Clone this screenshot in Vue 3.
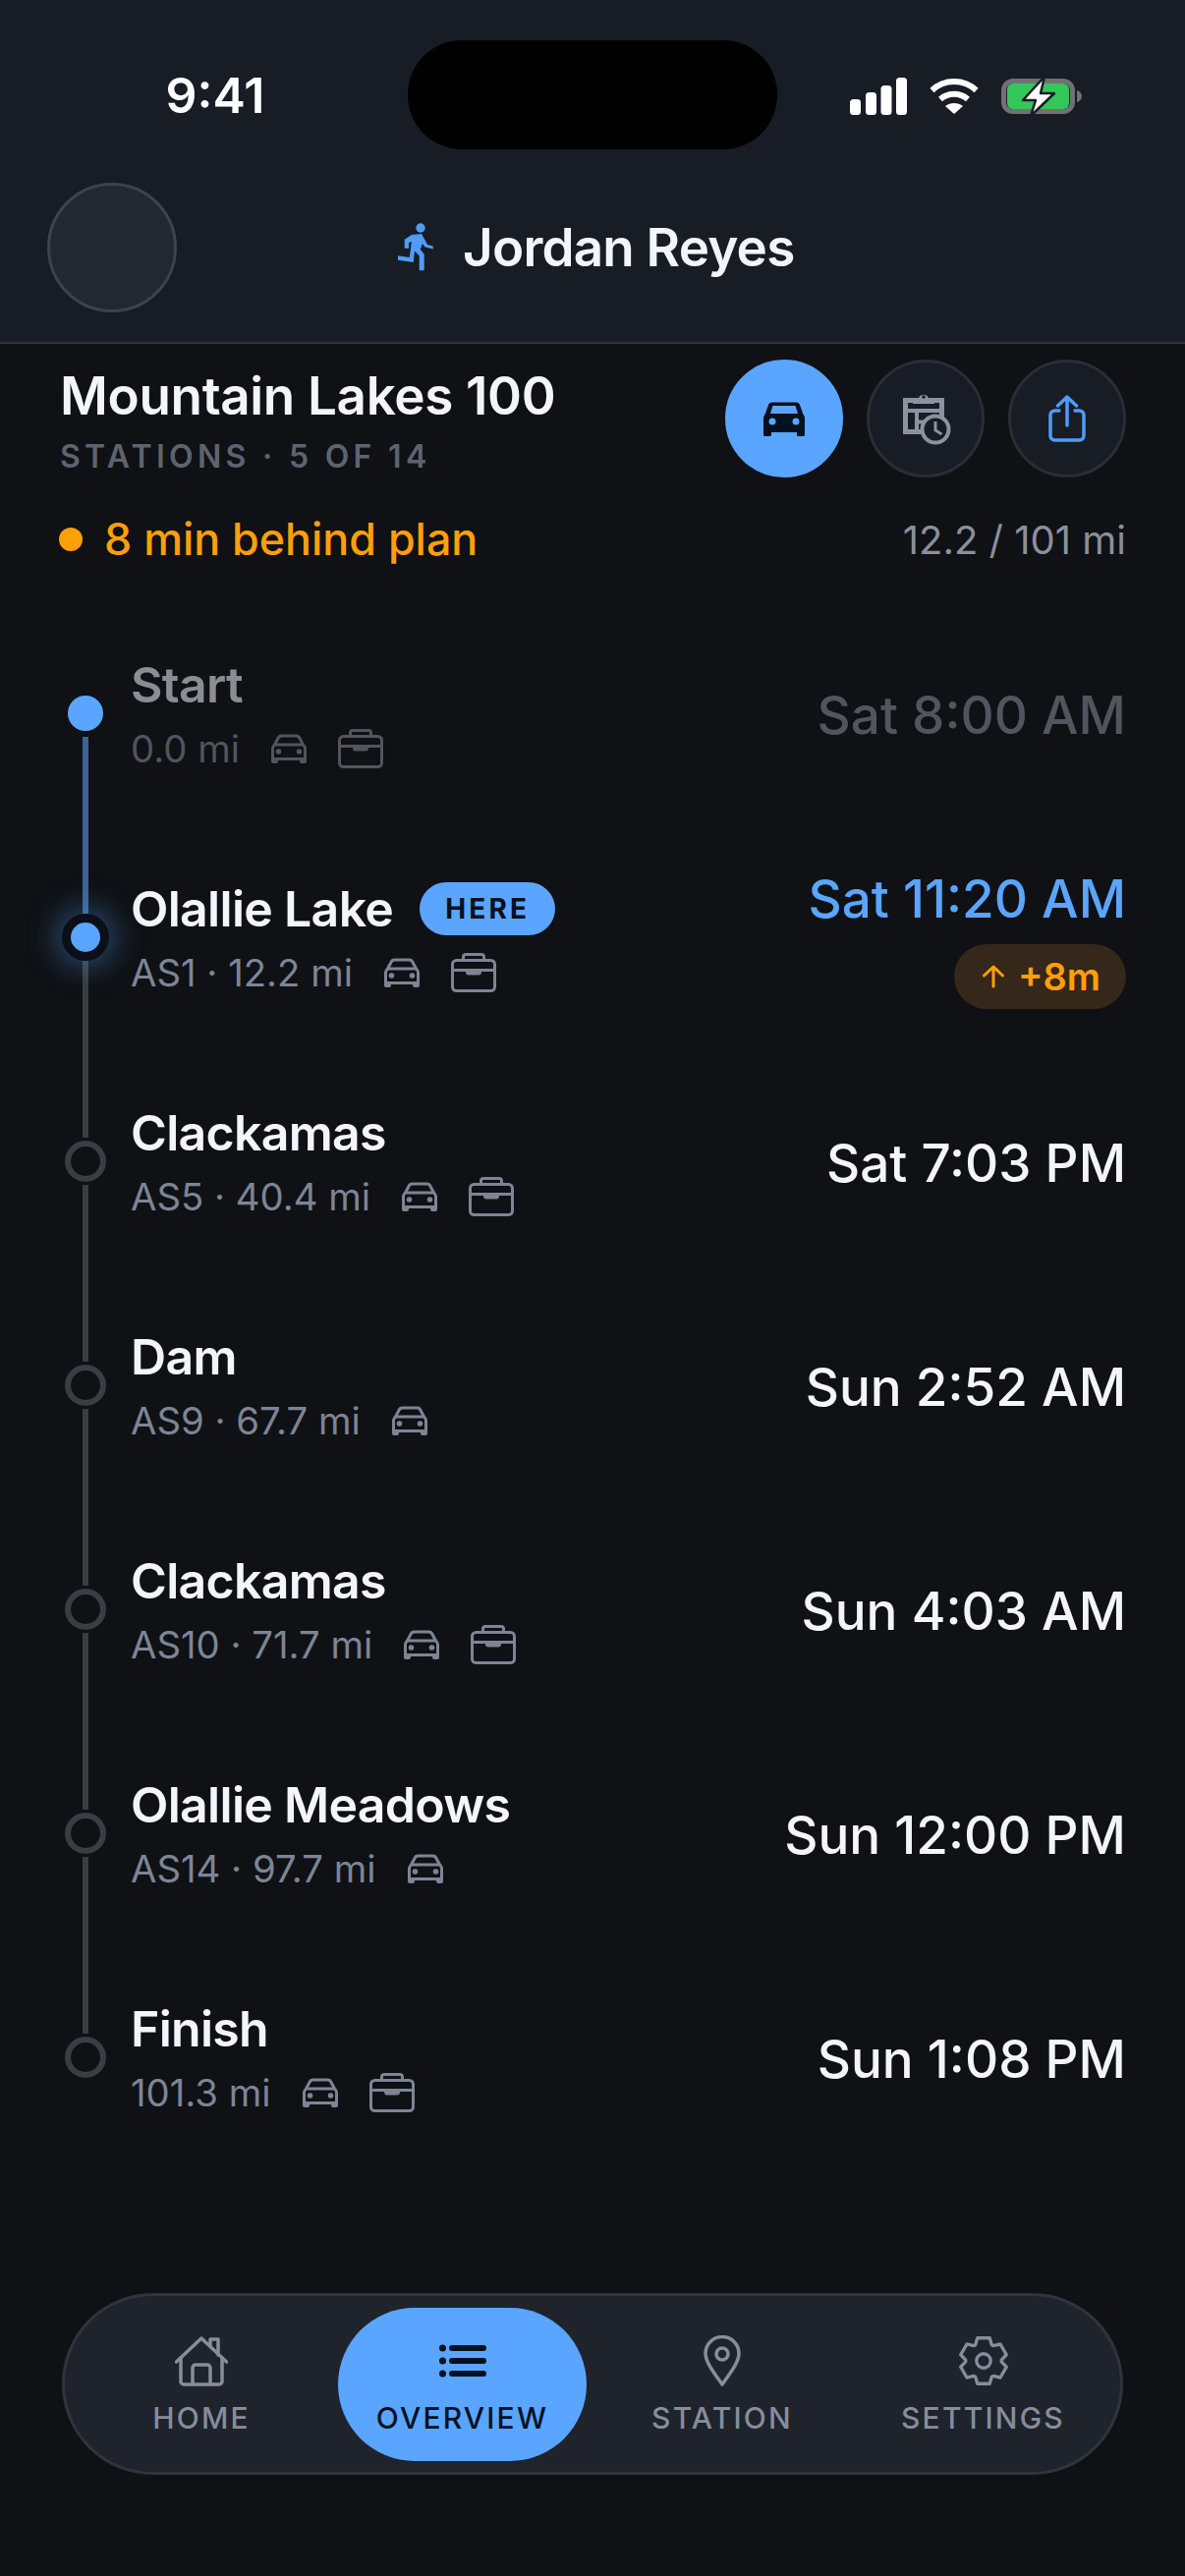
<script setup>
const tabs = [
  { label: 'HOME', icon: 'home' },
  { label: 'OVERVIEW', icon: 'list', active: true },
  { label: 'STATION', icon: 'pin' },
  { label: 'SETTINGS', icon: 'gear' }
]
const stations = [
  { name: 'Start', sub: '0.0 mi', time: 'Sat 8:00 AM', bag: true, state: 'is-done' },
  { name: 'Olallie Lake', sub: 'AS1 · 12.2 mi', time: 'Sat 11:20 AM', bag: true, state: 'is-here' },
  { name: 'Clackamas', sub: 'AS5 · 40.4 mi', time: 'Sat 7:03 PM', bag: true },
  { name: 'Dam', sub: 'AS9 · 67.7 mi', time: 'Sun 2:52 AM', bag: false },
  { name: 'Clackamas', sub: 'AS10 · 71.7 mi', time: 'Sun 4:03 AM', bag: true },
  { name: 'Olallie Meadows', sub: 'AS14 · 97.7 mi', time: 'Sun 12:00 PM', bag: false },
  { name: 'Finish', sub: '101.3 mi', time: 'Sun 1:08 PM', bag: true, last: true }
]
const gear = (() => {
  const pt = (r, deg) => {
    const a = (deg * Math.PI) / 180
    return `${(26 + r * Math.cos(a)).toFixed(2)} ${(27 + r * Math.sin(a)).toFixed(2)}`
  }
  let d = ''
  for (let i = 0; i < 6; i++) {
    const t = -90 + i * 60
    d += `${i ? 'L' : 'M'}${pt(19, t - 27)} L${pt(25, t - 15)} L${pt(25, t + 15)} L${pt(19, t + 27)} `
  }
  return d + 'Z'
})()
</script>

<template>
  <div class="screen">
    <svg class="defs" width="0" height="0" aria-hidden="true">
      <symbol id="car" viewBox="0 0 36 30">
        <g fill="none" stroke="currentColor" stroke-width="3" stroke-linejoin="round">
          <path d="M3.500 11 7 4.500C7.600 3 8.800 2 10.500 2h15c1.700 0 2.900 1 3.500 2.500L32.500 11"/>
          <path d="M3.500 11h29c.8.800 2 2 2 3.500V25.500h-33V14.500c0-1.500 1.200-2.700 2-3.500z"/>
        </g>
        <path d="M0 25h7v3a2 2 0 0 1-2 2H2a2 2 0 0 1-2-2zM29 25h7v3a2 2 0 0 1-2 2h-3a2 2 0 0 1-2-2z" fill="currentColor"/>
        <circle cx="7.500" cy="18" r="2.800" fill="currentColor"/>
        <circle cx="28.500" cy="18" r="2.800" fill="currentColor"/>
      </symbol>
      <symbol id="bag" viewBox="0 0 46 40">
        <g fill="none" stroke="currentColor" stroke-width="3" stroke-linejoin="round">
          <rect x="1.500" y="7.500" width="43" height="31" rx="4"/>
          <path d="M12.500 7V4a2.500 2.500 0 0 1 2.500-2.500h16A2.500 2.500 0 0 1 33.500 4v3"/>
          <path d="M2 17.500h42"/>
        </g>
        <path d="M15 17h16v2.500a3 3 0 0 1-3 3H18a3 3 0 0 1-3-3z" fill="currentColor"/>
      </symbol>
    </svg>

    <header class="top">
      <div class="status">
        <span class="clock">9:41</span>
        <div class="island"></div>
        <div class="status-icons">
          <svg width="58" height="38" viewBox="0 0 58 38"><g fill="#fff"><rect x="0" y="22" width="11" height="16" rx="3.500"/><rect x="16" y="15" width="11" height="23" rx="3.500"/><rect x="31.500" y="8" width="11" height="30" rx="3.500"/><rect x="47" y="0" width="11" height="38" rx="3.500"/></g></svg>
          <svg width="50" height="38" viewBox="0 0 50 38"><g fill="none" stroke="#fff" stroke-width="6"><path d="M2.500 13C15 1 35 1 47.500 13"/><path d="M11 22c8-7 20-7 28 0"/></g><path d="M25 37l-9-8c5-4 13-4 18 0z" fill="#fff"/></svg>
          <svg width="82" height="42" viewBox="0 0 82 42"><rect x="2.500" y="5.500" width="70" height="31" rx="9.500" fill="none" stroke="#6f7177" stroke-width="5"/><rect x="6" y="8" width="63" height="26" rx="6" fill="#34c759"/><path d="M77 15c3 .8 5 3 5 6s-2 5.200-5 6z" fill="#6f7177"/><path d="M44 1 22 25h13l-5 16 24-23H40z" fill="#fff" stroke="#181c24" stroke-width="2.500" stroke-linejoin="round"/></svg>
        </div>
      </div>
      <div class="identity">
        <div class="avatar"></div>
        <div class="runner">
          <svg width="38" height="50" viewBox="0 0 38 50" fill="#4f9cf9"><circle cx="23" cy="5" r="4.700"/><path d="M6.700 16.700 14 12l10-1 6 11 5.700 1.500v3l-8-2-2.700-3.500-2.300 5.700 4 5v16.600h-5V33.300L17 28.500 15.700 40 0 37.700v-4.400L11.700 35 14 19l-3 1v5.700H6.700z"/></svg>
          <span class="who">Jordan Reyes</span>
        </div>
      </div>
    </header>

    <main class="body">
      <section class="race">
        <div class="race-text">
          <h1>Mountain Lakes 100</h1>
          <p class="eyebrow">STATIONS · 5 OF 14</p>
        </div>
        <div class="actions">
          <button class="round on">
            <svg width="42" height="36" viewBox="0 0 42 36"><path d="M9 1.500h24c2 0 3.500 1 4 2.800L40.500 14c1 1 1.500 2.200 1.500 4v16.500a1.500 1.500 0 0 1-1.500 1.500h-5a1.500 1.500 0 0 1-1.500-1.500V32H8v2.500A1.500 1.500 0 0 1 6.500 36h-5A1.500 1.500 0 0 1 0 34.500V18c0-1.800.5-3 1.500-4L5 4.300c.5-1.800 2-2.800 4-2.800zM9.500 5 7 13h28l-2.500-8z" fill="#06111f" fill-rule="evenodd"/><circle cx="9" cy="21" r="3.500" fill="#5aa5ff"/><circle cx="33" cy="21" r="3.500" fill="#5aa5ff"/></svg>
          </button>
          <button class="round">
            <svg class="clip" width="50" height="54" viewBox="0 0 50 54"><g fill="none" stroke="#8b92a0" stroke-width="5"><path d="M3.500 8.500h37v32h-37z"/></g><path d="M11 6h6a5.500 5.500 0 0 1 10 0h6v6H11z" fill="#8b92a0"/><circle cx="22" cy="5" r="1.800" fill="#181c24"/><g fill="none" stroke="#8b92a0" stroke-width="4"><path d="M3 19h38M15 19v22M15 30.500h9"/></g><circle cx="34" cy="38" r="13.500" fill="#181c24" stroke="#8b92a0" stroke-width="4"/><path d="M34 30v9l6.500 4" fill="none" stroke="#8b92a0" stroke-width="3"/></svg>
          </button>
          <button class="round">
            <svg width="38" height="48" viewBox="0 0 38 48" fill="none" stroke="#4f9cf9" stroke-width="3.500" stroke-linecap="round" stroke-linejoin="round"><path d="M11 16H6.500a4.500 4.500 0 0 0-4.500 4.500v21A4.500 4.500 0 0 0 6.500 46h25a4.500 4.500 0 0 0 4.500-4.500v-21a4.500 4.500 0 0 0-4.500-4.500H27"/><path d="M19 31V2M9.500 11 19 2l9.500 9"/></svg>
          </button>
        </div>
      </section>

      <section class="behind">
        <span class="alert"><i class="alert-dot"></i>8 min behind plan</span>
        <span class="progress">12.2 / 101 mi</span>
      </section>

      <ol class="stations">
        <li v-for="s in stations" :key="s.sub" class="station" :class="s.state">
          <div class="rail">
            <i v-if="!s.last" class="segment"></i>
            <i class="node"></i>
          </div>
          <div class="info">
            <div class="name-row">
              <span class="name">{{ s.name }}</span>
              <span v-if="s.state === 'is-here'" class="tag">HERE</span>
            </div>
            <div class="sub">
              <span>{{ s.sub }}</span>
              <svg class="i-car"><use href="#car"/></svg>
              <svg v-if="s.bag" class="i-bag"><use href="#bag"/></svg>
            </div>
          </div>
          <div class="when">
            <span class="time">{{ s.time }}</span>
            <span v-if="s.state === 'is-here'" class="delta">
              <svg width="22" height="24" viewBox="0 0 22 24" fill="none" stroke="#ff9f0a" stroke-width="3" stroke-linecap="round" stroke-linejoin="round"><path d="M11 22V2M1.500 11 11 2l9.500 9"/></svg>
              +8m
            </span>
          </div>
        </li>
      </ol>
    </main>

    <nav class="tabs">
      <a v-for="t in tabs" :key="t.label" class="tab" :class="{ active: t.active }">
        <svg v-if="t.icon === 'home'" width="54" height="52" viewBox="0 0 54 52" fill="none" stroke="currentColor" stroke-width="3.500" stroke-linecap="round" stroke-linejoin="round"><path d="M1.500 27 27 3l25.500 24"/><path d="M36 11V4h8v16"/><path d="M6 23v24a3 3 0 0 0 3 3h36a3 3 0 0 0 3-3V23"/><path d="M18 50V33a3 3 0 0 1 3-3h12a3 3 0 0 1 3 3v17"/></svg>
        <svg v-else-if="t.icon === 'list'" width="48" height="34" viewBox="0 0 48 34" fill="currentColor"><circle cx="3.500" cy="4" r="3.500"/><circle cx="3.500" cy="17" r="3.500"/><circle cx="3.500" cy="30" r="3.500"/><rect x="10" y="1" width="38" height="6" rx="3"/><rect x="10" y="14" width="38" height="6" rx="3"/><rect x="10" y="27" width="38" height="6" rx="3"/></svg>
        <svg v-else-if="t.icon === 'pin'" width="38" height="52" viewBox="0 0 38 52" fill="none" stroke="currentColor" stroke-width="3.500" stroke-linejoin="round"><path d="M19 50C12 40 2 28 2 18.500a17 17 0 0 1 34 0C36 28 26 40 19 50z"/><circle cx="19" cy="19" r="6"/></svg>
        <svg v-else width="52" height="54" viewBox="0 0 52 54" fill="none" stroke="currentColor" stroke-width="3.500" stroke-linejoin="round"><path :d="gear"/><circle cx="26" cy="27" r="7.500"/></svg>
        <span>{{ t.label }}</span>
      </a>
    </nav>
  </div>
</template>

<style>
html, body { margin: 0; background: #0f1115; }
</style>

<style scoped>
.screen {
  width: 1206px;
  height: 2622px;
  display: flex;
  flex-direction: column;
  background: #0f1115;
  font-family: Inter, "Liberation Sans", sans-serif;
  color: #f2f5f9;
  overflow: hidden;
}
.defs { position: absolute; }
.top {
  height: 350px;
  box-sizing: border-box;
  background: #181c24;
  border-bottom: 2px solid #2f3238;
  flex: none;
}
.status {
  height: 186px;
  padding-top: 41px;
  box-sizing: border-box;
  display: grid;
  grid-template-columns: 415px 376px 1fr;
  align-items: start;
}
.clock {
  font-size: 50px;
  font-weight: 600;
  color: #fff;
  text-align: center;
  padding-left: 23px;
  line-height: 112px;
}
.island { height: 111px; background: #000; border-radius: 55px; }
.status-icons {
  display: flex;
  align-items: center;
  gap: 23px;
  padding: 36px 0 0 74px;
}
.identity { display: flex; padding-left: 48px; }
.avatar {
  width: 132px;
  height: 132px;
  box-sizing: border-box;
  border: 3px solid #3b4252;
  border-radius: 50%;
  background: #23272f;
  flex: none;
}
.runner {
  display: flex;
  align-items: center;
  gap: 28px;
  margin-left: 225px;
  height: 132px;
}
.who { font-size: 53px; font-weight: 600; letter-spacing: -0.8px; }
.body { flex: 1; padding: 16px 60px 0 60px; min-height: 0; }
.race { display: flex; justify-content: space-between; align-items: flex-start; }
.race-text { padding: 7px 0 0 1px; }
h1 { margin: 0; font-size: 53px; font-weight: 600; line-height: 60px; letter-spacing: -0.35px; white-space: nowrap; }
.eyebrow {
  margin: 14px 0 0;
  font-size: 32px;
  line-height: 36px;
  font-weight: 600;
  letter-spacing: 4.300px;
  color: #5d6470;
}
.actions { display: flex; gap: 24px; }
.round {
  width: 120px;
  height: 120px;
  padding: 0;
  box-sizing: border-box;
  border: 3px solid #2a2d35;
  border-radius: 50%;
  background: #181c24;
  display: grid;
  place-items: center;
}
.clip { margin-left: 2px; }
.round.on { background: #5aa5ff; border-color: #5aa5ff; }
.behind {
  display: flex;
  justify-content: space-between;
  align-items: center;
  margin-top: 37px;
  height: 52px;
}
.alert {
  display: flex;
  align-items: center;
  gap: 22px;
  font-size: 44.800px;
  font-weight: 500;
  color: #ff9f0a;
}
.alert-dot { width: 24px; height: 24px; border-radius: 50%; background: #ff9f0a; }
.progress { font-size: 40px; color: #8a909c; padding-top: 1px; }
.stations { list-style: none; margin: 37px 0 0; padding: 0; }
.station {
  height: 228px;
  display: grid;
  grid-template-columns: 73px 1fr auto;
  align-items: center;
}
.rail { position: relative; height: 228px; }
.segment {
  position: absolute;
  left: 24px;
  top: 138px;
  width: 6px;
  height: 180px;
  background: #3a3d42;
}
.is-done .segment { background: #3a6496; }
.node {
  position: absolute;
  left: 6px;
  top: 93px;
  width: 42px;
  height: 42px;
  box-sizing: border-box;
  border: 6px solid #3a3d42;
  border-radius: 50%;
  background: #0f1115;
}
.is-done .node { left: 9px; top: 96px; width: 36px; height: 36px; border: 0; background: #5aa5ff; }
.is-here .node {
  left: 3px;
  top: 90px;
  width: 48px;
  height: 48px;
  border: 9px solid #0a0f18;
  background: #5aa5ff;
  box-shadow: 0 0 30px 6px rgba(90, 165, 255, 0.38);
}
.name-row { display: flex; align-items: center; gap: 27px; height: 58px; }
.name { font-size: 50px; font-weight: 600; letter-spacing: -0.7px; white-space: nowrap; }
.tag {
  height: 54px;
  padding: 0 26px;
  display: flex;
  align-items: center;
  border-radius: 27px;
  background: #5aa5ff;
  color: #06111f;
  font-size: 28px;
  font-weight: 700;
  letter-spacing: 3.200px;
}
.sub {
  display: flex;
  align-items: center;
  margin-top: 14px;
  font-size: 38.300px;
  color: #7d8595;
  height: 44px;
}
.i-car { width: 36px; height: 30px; margin-left: 32px; }
.i-bag { width: 46px; height: 40px; margin-left: 32px; }
.when { display: flex; flex-direction: column; align-items: flex-end; padding-top: 3px; }
.time {
  font-size: 53px;
  font-weight: 500;
  line-height: 72px;
  white-space: nowrap;
}
.is-here .when { padding: 0 0 3px; }
.delta {
  display: flex;
  align-items: center;
  gap: 14px;
  margin-top: 10px;
  height: 66px;
  padding: 0 26px 0 29px;
  border-radius: 33px;
  background: #35271a;
  color: #ff9f0a;
  font-size: 38px;
  font-weight: 600;
}
.is-here .time { color: #5aa5ff; }
.is-done .name { color: #8a8d92; }
.is-done .sub { color: #50555e; }
.is-done .time { color: #50555e; }
.tabs {
  flex: none;
  margin: 0 63px 103px;
  height: 185px;
  box-sizing: border-box;
  border: 3px solid #2f343d;
  border-radius: 93px;
  background: #1f232c;
  display: grid;
  grid-template-columns: 278px 253px 276px 1fr;
  align-items: center;
  padding-right: 12px;
}
.tab {
  height: 156px;
  box-sizing: border-box;
  padding-top: 3px;
  display: flex;
  flex-direction: column;
  align-items: center;
  justify-content: center;
  gap: 14px;
  color: #868d9b;
  border-radius: 78px;
  font-size: 30px;
  font-weight: 500;
  letter-spacing: 2.200px;
}
.tab svg { height: 52px; }
.tab.active { background: #5aa5ff; color: #06111f; }
</style>
